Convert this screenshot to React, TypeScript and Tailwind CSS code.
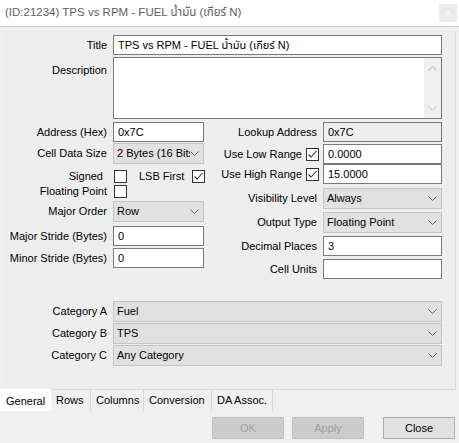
import React from "react";

function Chevron({ color = "#606060" }: { color?: string }) {
  return (
    <svg width="9" height="5" viewBox="0 0 9 5" className="shrink-0">
      <path d="M0.5 0.5 L4.5 4.5 L8.5 0.5" fill="none" stroke={color} strokeWidth="1" />
    </svg>
  );
}

function ChevronUp({ color = "#c4c4c4" }: { color?: string }) {
  return (
    <svg width="9" height="5" viewBox="0 0 9 5" className="shrink-0">
      <path d="M0.5 4.5 L4.5 0.5 L8.5 4.5" fill="none" stroke={color} strokeWidth="1.2" />
    </svg>
  );
}

function TextBox({ value = "", className = "", readOnly = false }: { value?: string; className?: string; readOnly?: boolean }) {
  return (
    <div
      className={`h-[20px] border border-[#7a7a7a] ${readOnly ? "bg-[#efefef]" : "bg-white"} flex items-center pl-[4px] whitespace-nowrap overflow-hidden shrink-0 ${className}`}
    >
      {value}
    </div>
  );
}

function Combo({ value, className = "" }: { value: string; className?: string }) {
  return (
    <div className={`h-[21px] border border-[#c4c4c4] bg-[#e1e1e1] flex items-center pl-[3px] pr-[4px] shrink-0 ${className}`}>
      <span className="flex-1 overflow-hidden whitespace-nowrap">{value}</span>
      <Chevron />
    </div>
  );
}

function Check({ checked = false, className = "" }: { checked?: boolean; className?: string }) {
  return (
    <div className={`w-[13px] h-[13px] border border-[#333333] bg-white shrink-0 ${className}`}>
      {checked && (
        <svg width="11" height="11" viewBox="0 0 11 11">
          <path d="M1.5 5.5 L4 8 L9.5 2" fill="none" stroke="#333333" strokeWidth="1.1" />
        </svg>
      )}
    </div>
  );
}

function LRow({ label, children, className = "" }: { label: string; children: React.ReactNode; className?: string }) {
  return (
    <div className={`flex items-center ${className}`}>
      <div className="w-[105px] text-right whitespace-nowrap">{label}</div>
      <div className="ml-[6px] flex">{children}</div>
    </div>
  );
}

function RRow({ label, children, className = "" }: { label: string; children: React.ReactNode; className?: string }) {
  return (
    <div className={`flex items-center ${className}`}>
      <div className="w-[112px] text-right whitespace-nowrap">{label}</div>
      <div className="ml-[6px] flex">{children}</div>
    </div>
  );
}

function CRow({ label, value, className = "" }: { label: string; value: string; className?: string }) {
  return (
    <div className={`flex items-center ${className}`}>
      <div className="w-[97px] text-right whitespace-nowrap">{label}</div>
      <Check checked className="ml-[4px]" />
      <TextBox value={value} className="ml-[4px] w-[119px]" />
    </div>
  );
}

function Tab({ label, className = "" }: { label: string; className?: string }) {
  return (
    <div className={`h-[21px] border-r border-[#d9d9d9] flex items-center pl-[5px] whitespace-nowrap ${className}`}>
      {label}
    </div>
  );
}

export default function App() {
  return (
    <div className="w-[459px] h-[443px] bg-[#f0f0f0] flex flex-col overflow-hidden text-[11px] text-black font-[family-name:Liberation_Sans,Noto_Sans_Thai,Noto_Sans,sans-serif]">
      {/* Title bar */}
      <div className="h-[27px] bg-white border-b border-[#cccccc] flex items-center justify-between pl-[5px] pr-[2px] shrink-0">
        <div className="text-[11.5px] text-[#606060] whitespace-nowrap">(ID:21234) TPS vs RPM - FUEL น้ำมัน (เกียร์ N)</div>
        <div className="w-[18px] h-[18px] bg-[#ebebeb] flex items-center justify-center text-[10px] text-white leading-none">x</div>
      </div>

      {/* Tab page */}
      <div className="ml-[2px] mt-[4px] w-[454px] h-[359px] border-r border-b border-[#dadada] bg-[#eeeeee] pt-[4px] flex flex-col shrink-0">
        <LRow label="Title">
          <TextBox value="TPS vs RPM - FUEL น้ำมัน (เกียร์ N)" className="w-[329px]" />
        </LRow>

        <div className="flex mt-[2px]">
          <div className="w-[105px] text-right pt-[5px]">Description</div>
          <div className="ml-[6px] w-[329px] h-[62px] border border-[#7a7a7a] bg-white flex justify-end">
            <div className="w-[17px] h-full bg-[#f0f0f0] flex flex-col items-center justify-between pt-[8px] pb-[7px]">
              <ChevronUp />
              <Chevron color="#c4c4c4" />
            </div>
          </div>
        </div>

        <div className="flex mt-[3px] h-[157px]">
          {/* Left column */}
          <div className="w-[203px] flex flex-col">
            <LRow label="Address (Hex)">
              <TextBox value="0x7C" className="w-[91px]" />
            </LRow>
            <LRow label="Cell Data Size" className="mt-[1px]">
              <Combo value="2 Bytes (16 Bits)" className="w-[91px]" />
            </LRow>
            <div className="flex items-center mt-[6px] h-[13px]">
              <div className="w-[101px] text-right">Signed</div>
              <Check className="ml-[11px]" />
              <div className="ml-[12px]">LSB First</div>
              <Check checked className="ml-auto" />
            </div>
            <div className="flex items-center mt-[2px] h-[13px]">
              <div className="w-[105px] text-right whitespace-nowrap">Floating Point</div>
              <Check className="ml-[7px]" />
            </div>
            <LRow label="Major Order" className="mt-[3px]">
              <Combo value="Row" className="w-[91px]" />
            </LRow>
            <LRow label="Major Stride (Bytes)" className="mt-[4px]">
              <TextBox value="0" className="w-[91px]" />
            </LRow>
            <LRow label="Minor Stride (Bytes)" className="mt-[2px]">
              <TextBox value="0" className="w-[91px]" />
            </LRow>
          </div>

          {/* Right column */}
          <div className="w-[237px] flex flex-col">
            <RRow label="Lookup Address">
              <TextBox value="0x7C" readOnly className="w-[119px]" />
            </RRow>
            <CRow label="Use Low Range" value="0.0000" className="mt-[2px]" />
            <CRow label="Use High Range" value="15.0000" />
            <RRow label="Visibility Level" className="mt-[4px]">
              <Combo value="Always" className="w-[119px]" />
            </RRow>
            <RRow label="Output Type" className="mt-[3px]">
              <Combo value="Floating Point" className="w-[119px]" />
            </RRow>
            <RRow label="Decimal Places" className="mt-[3px]">
              <TextBox value="3" className="w-[119px]" />
            </RRow>
            <RRow label="Cell Units" className="mt-[3px]">
              <TextBox value="" className="w-[119px]" />
            </RRow>
          </div>
        </div>

        <LRow label="Category A" className="mt-[22px]">
          <Combo value="Fuel" className="w-[329px]" />
        </LRow>
        <LRow label="Category B" className="mt-[1px]">
          <Combo value="TPS" className="w-[329px]" />
        </LRow>
        <LRow label="Category C" className="mt-[1px]">
          <Combo value="Any Category" className="w-[329px]" />
        </LRow>
      </div>

      {/* Tabs */}
      <div className="flex h-[21px] shrink-0">
        <div className="-mt-[1px] h-[22px] w-[51px] bg-white flex items-center pl-[6px] pt-[3px]">General</div>
        <Tab label="Rows" className="w-[40px]" />
        <Tab label="Columns" className="w-[53px]" />
        <Tab label="Conversion" className="w-[68px]" />
        <Tab label="DA Assoc." className="w-[61px]" />
      </div>

      {/* Buttons */}
      <div className="flex justify-end mt-[6px] pr-[4px] shrink-0">
        <div className="w-[72px] h-[22px] bg-[#cccccc] border border-[#bfbfbf] text-[#a0a0a0] flex items-center justify-center">OK</div>
        <div className="ml-[8px] w-[72px] h-[22px] bg-[#cccccc] border border-[#bfbfbf] text-[#a0a0a0] flex items-center justify-center">Apply</div>
        <div className="ml-[19px] w-[72px] h-[22px] bg-[#e1e1e1] border border-[#adadad] flex items-center justify-center">Close</div>
      </div>
    </div>
  );
}
